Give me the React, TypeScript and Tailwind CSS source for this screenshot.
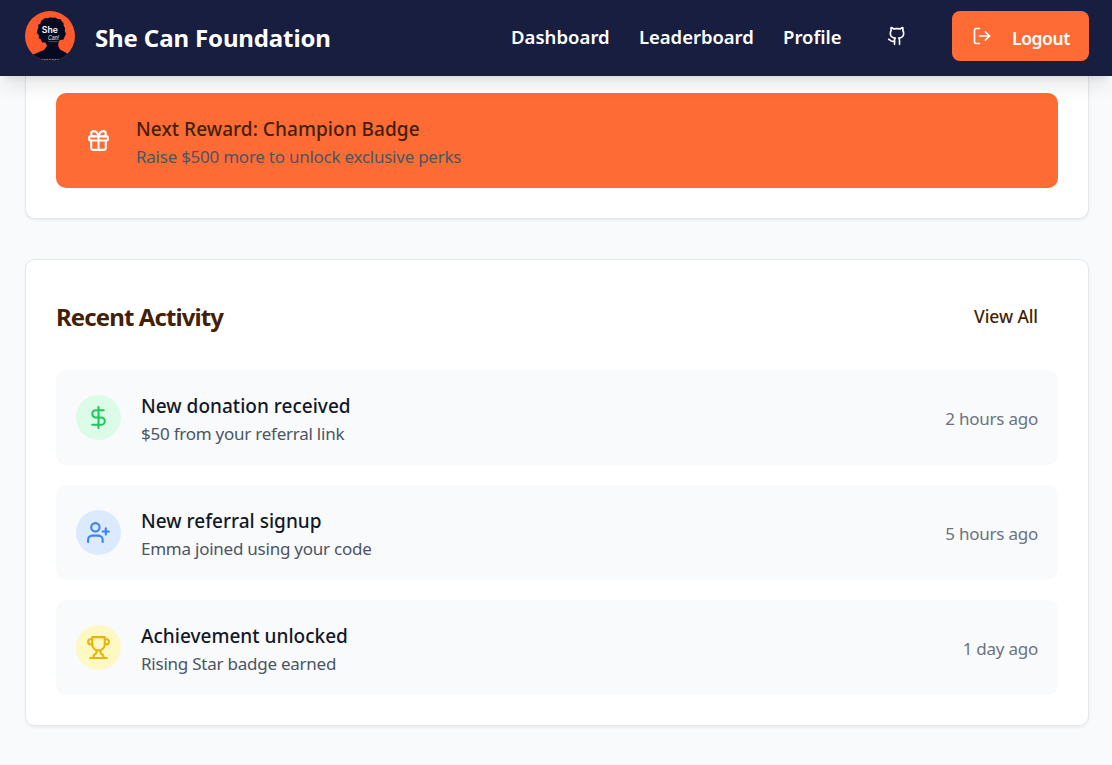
import type { ComponentType } from "react";
import { DollarSign, Gift, Github, LogOut, UserPlus } from "lucide-react";

type IconProps = { className?: string; strokeWidth?: number };

type Activity = {
  title: string;
  detail: string;
  time: string;
  icon: ComponentType<IconProps>;
  tone: string;
};

function TrophyIcon({ className, strokeWidth = 2 }: IconProps) {
  return (
    <svg
      viewBox="0 0 24 24"
      fill="none"
      stroke="currentColor"
      strokeWidth={strokeWidth}
      strokeLinecap="round"
      strokeLinejoin="round"
      className={className}
    >
      <path d="M6 9H4.5a2.5 2.5 0 0 1 0-5H6" />
      <path d="M18 9h1.5a2.5 2.5 0 0 0 0-5H18" />
      <path d="M4 22h16" />
      <path d="M10 14.66V17c0 .55-.47.98-.97 1.21C7.85 18.75 7 20.24 7 22" />
      <path d="M14 14.66V17c0 .55.47.98.97 1.21C16.15 18.75 17 20.24 17 22" />
      <path d="M18 2H6v7a6 6 0 0 0 12 0V2Z" />
    </svg>
  );
}

const activities: Activity[] = [
  {
    title: "New donation received",
    detail: "$50 from your referral link",
    time: "2 hours ago",
    icon: DollarSign,
    tone: "bg-[#dcfce7] text-[#22c55e]",
  },
  {
    title: "New referral signup",
    detail: "Emma joined using your code",
    time: "5 hours ago",
    icon: UserPlus,
    tone: "bg-[#dbeafe] text-[#3b82f6]",
  },
  {
    title: "Achievement unlocked",
    detail: "Rising Star badge earned",
    time: "1 day ago",
    icon: TrophyIcon,
    tone: "bg-[#fef9c3] text-[#eab308]",
  },
];

function Logo() {
  return (
    <svg viewBox="0 0 50 50" className="size-[50px] shrink-0" aria-label="She Can Foundation logo">
      <defs>
        <clipPath id="logo-clip">
          <circle cx="25" cy="25" r="25" />
        </clipPath>
      </defs>
      <g clipPath="url(#logo-clip)">
        <rect width="50" height="50" fill="#ff5a2c" />
        <path
          fill="#030a22"
          d="M18 8.5 L20 7 L23 7.2 L25 6.2 L28 6.7 L30 6.5 L33 8 L35.5 8.2 L37 10.5 L38.5 12 L38.8 15 L40 17 L39.8 20 L41 23 L39.5 26 L38.5 28.5 L35 29 L33.5 31 L33.2 35 L35 38.5 L45 44 L45 50 L5 50 L8 43.5 L19 39 L22 35 L20.5 31.5 L17 31.5 L16 28.5 L13.5 27 L14 24.5 L12 22 L12.5 18.5 L13.5 16.5 L13 14 L15.5 12.5 L16 10 Z"
        />
        <text x="16.8" y="21.8" fill="#fff" fontSize="8.6" fontWeight="600" fontFamily="Inter, 'Liberation Sans', sans-serif" textLength="16" lengthAdjust="spacingAndGlyphs">She</text>
        <text x="23" y="29.2" fill="#e9ebf0" fontSize="7.4" fontStyle="italic" fontFamily="'Liberation Sans', sans-serif" textLength="11" lengthAdjust="spacingAndGlyphs">Can!</text>
        <path d="M23.5 30.6h9" stroke="#a8433b" strokeWidth=".8" />
        <path d="M16 48.4h18" stroke="#9a9eac" strokeWidth=".8" strokeDasharray="2 .7" />
      </g>
    </svg>
  );
}

function Header() {
  return (
    <header className="relative z-10 flex h-[76px] items-center justify-between bg-[#181e40] pr-[23px] pb-1 pl-[25px] text-white shadow-[0_12.5px_18.75px_-3.75px_rgba(0,0,0,0.1),0_5px_7.5px_-5px_rgba(0,0,0,0.1)]">
      <a href="#" className="flex items-center gap-5">
        <Logo />
        <span className="pt-0.5 text-[24px] leading-[35px] font-bold tracking-[-0.13px]">She Can Foundation</span>
      </a>
      <nav className="flex items-center gap-[30px] text-[18.5px] leading-[30px] font-semibold">
        <a href="#" className="w-[98px] pt-0.5 tracking-[0.04px]">Dashboard</a>
        <a href="#" className="w-[114px] pt-0.5 tracking-[-0.05px] whitespace-nowrap">Leaderboard</a>
        <a href="#" className="w-[59px] pt-0.5">Profile</a>
        <button className="flex size-[50px] items-center justify-center" aria-label="GitHub">
          <Github className="size-5" strokeWidth={2} />
        </button>
        <button className="flex h-[50px] w-[137px] items-center gap-5 rounded-[8px] bg-[#ff6b35] pl-5 text-[17.5px] tracking-[-0.4px]">
          <LogOut className="size-5 shrink-0" strokeWidth={2} />
          <span className="pt-[3px]">Logout</span>
        </button>
      </nav>
    </header>
  );
}

function ActivityRow({ title, detail, time, icon: Icon, tone }: Activity) {
  return (
    <li className="flex h-[95px] items-center justify-between rounded-[10px] bg-[#f9fafb] px-5">
      <div className="flex items-center gap-5">
        <div className={`flex size-[45px] items-center justify-center rounded-full ${tone}`}>
          <Icon className="size-[25px]" strokeWidth={2} />
        </div>
        <div className="pt-0.5">
          <p className="text-[19px] leading-[30px] font-medium tracking-[0.02px] text-[#111827]">{title}</p>
          <p className="text-[17px] leading-[25px] tracking-[-0.24px] text-[#4b5563]">{detail}</p>
        </div>
      </div>
      <span className="pt-0.5 text-[17px] leading-[25px] tracking-[-0.24px] text-[#6b7280]">{time}</span>
    </li>
  );
}

export default function App() {
  return (
    <div className="h-[765px] overflow-hidden bg-[#f9fafb] font-['Noto_Sans','Open_Sans',sans-serif]">
      <Header />
      <main className="flex flex-col gap-10 pr-[23px] pl-[25px]">
        <section className="rounded-b-[10px] border border-t-0 border-[#e5e7eb] bg-white px-[30px] pt-[17px] pb-[30px] shadow-[0_1.25px_2.5px_rgba(0,0,0,0.05)]">
          <div className="flex h-[95px] items-center gap-[25px] rounded-[10px] bg-[#ff6b35] px-[30px]">
            <Gift className="size-[25px] text-white" strokeWidth={2} />
            <div className="pt-0.5">
              <p className="text-[19px] leading-[30px] font-medium tracking-[0.06px] text-[#431f07]">Next Reward: Champion Badge</p>
              <p className="text-[17px] leading-[25px] tracking-[-0.25px] text-[#4b5563]">Raise $500 more to unlock exclusive perks</p>
            </div>
          </div>
        </section>
        <section className="rounded-[10px] border border-[#e5e7eb] bg-white p-[30px] shadow-[0_1.25px_2.5px_rgba(0,0,0,0.05)]">
          <div className="mb-[30px] flex h-[50px] items-center justify-between">
            <h2 className="pt-0.5 text-[24px] leading-[35px] font-bold tracking-[-0.9px] text-[#431f07]">Recent Activity</h2>
            <button className="pt-0.5 pr-5 text-[17.5px] leading-[25px] font-medium tracking-[-0.1px] text-[#431f07]">View All</button>
          </div>
          <ul className="flex flex-col gap-5">
            {activities.map((activity) => (
              <ActivityRow key={activity.title} {...activity} />
            ))}
          </ul>
        </section>
      </main>
    </div>
  );
}
